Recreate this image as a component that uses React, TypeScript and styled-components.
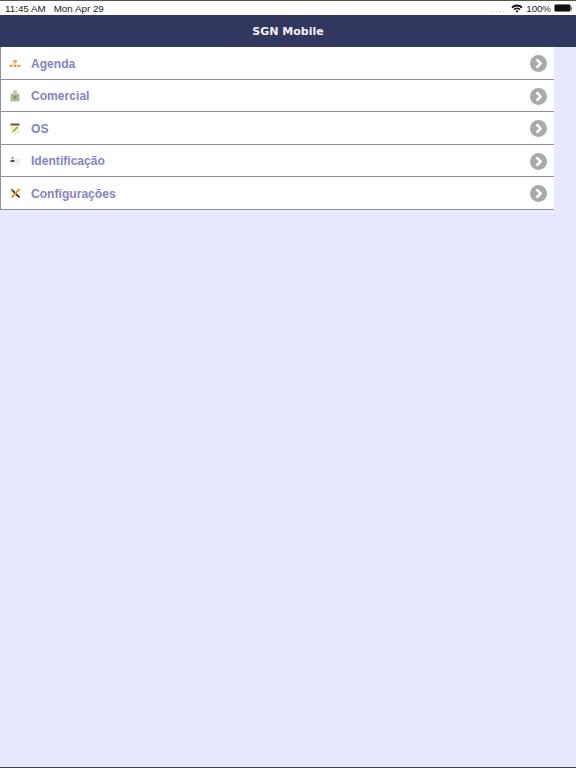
import React from "react"
import styled, { createGlobalStyle } from "styled-components"

const GlobalStyle = createGlobalStyle`
  html, body {
    margin: 0;
    padding: 0;
    height: 100%;
    background: #e7e7ff;
    font-family: "Liberation Sans", Arial, sans-serif;
  }
  #root {
    height: 100%;
  }
`

const AgendaIcon = () => (
  <svg width="12" height="10" viewBox="0 0 12 10">
    <rect x="4.2" y="1" width="3.6" height="2.8" fill="#f0a050" />
    <rect x="5.4" y="3.8" width="1.2" height="2" fill="#f3b98a" />
    <rect x="0.5" y="5.8" width="3" height="2" fill="#ec8f3c" />
    <rect x="4.5" y="5.8" width="3" height="2" fill="#ec8f3c" />
    <rect x="8.5" y="5.8" width="3" height="2" fill="#ec8f3c" />
  </svg>
)

const ComercialIcon = () => (
  <svg width="10" height="12" viewBox="0 0 10 12">
    <rect x="3" y="0.5" width="4" height="3" fill="#bcc8ae" />
    <rect x="0.5" y="3.5" width="9" height="8" rx="1" fill="#b0bca2" />
    <circle cx="5" cy="7.5" r="1.8" fill="#7d9669" />
  </svg>
)

const OsIcon = () => (
  <svg width="10" height="11" viewBox="0 0 10 11">
    <rect x="0.5" y="2" width="9" height="8.5" fill="#f5f1cf" />
    <rect x="0.5" y="0.5" width="9" height="2" fill="#7a4f42" />
    <path d="M3 8.5 L7.5 4" stroke="#86ad45" strokeWidth="1.6" />
  </svg>
)

const IdentIcon = () => (
  <svg width="12" height="10" viewBox="0 0 12 10">
    <rect x="1" y="3" width="10" height="6.5" fill="#f0f0f0" />
    <circle cx="3.5" cy="2" r="1.1" fill="#777" />
    <rect x="1.5" y="4" width="4" height="2" fill="#555" />
    <rect x="7" y="5" width="3.5" height="1" fill="#dedede" />
  </svg>
)

const ConfigIcon = () => (
  <svg width="11" height="11" viewBox="0 0 11 11">
    <path d="M1.5 1.5 L9.5 9.5" stroke="#4a3e32" strokeWidth="2" />
    <path d="M9.5 1 L1.5 9.5" stroke="#e39a28" strokeWidth="2" />
    <circle cx="2" cy="2" r="1.3" fill="#888" />
  </svg>
)

const Chevron = () => (
  <S.ChevronIcon width="17" height="17" viewBox="0 0 17 17">
    <circle cx="8.5" cy="8.5" r="8.5" fill="#a9a9a9" />
    <path d="M6.6 4.4 L10.6 8.5 L6.6 12.6" fill="none" stroke="#fff" strokeWidth="2.6" />
  </S.ChevronIcon>
)

const menu = [
  { label: "Agenda", icon: <AgendaIcon /> },
  { label: "Comercial", icon: <ComercialIcon /> },
  { label: "OS", icon: <OsIcon /> },
  { label: "Identificação", icon: <IdentIcon /> },
  { label: "Configurações", icon: <ConfigIcon /> },
]

export default function App() {
  return (
    <S.Page>
      <GlobalStyle />
      <S.StatusBar>
        <S.StatusGroup>
          <span>11:45 AM</span>
          <span>Mon Apr 29</span>
        </S.StatusGroup>
        <S.StatusRight>
          <S.Dots>....</S.Dots>
          <svg width="12" height="9" viewBox="0 0 12 9">
            <path d="M0.3 3 A8 8 0 0 1 11.7 3 L10.4 4.3 A6.2 6.2 0 0 0 1.6 4.3 Z" fill="#111" />
            <path d="M2.4 5 A5 5 0 0 1 9.6 5 L8.4 6.2 A3.3 3.3 0 0 0 3.6 6.2 Z" fill="#111" />
            <path d="M4.5 7 A2 2 0 0 1 7.5 7 L6 8.7 Z" fill="#111" />
          </svg>
          <S.Percent>100%</S.Percent>
          <S.Battery>
            <S.BatteryFill />
          </S.Battery>
          <S.BatteryNub />
        </S.StatusRight>
      </S.StatusBar>
      <S.Header>SGN Mobile</S.Header>
      <S.List>
        {menu.map((m) => (
          <S.Row key={m.label}>
            <S.IconSlot>{m.icon}</S.IconSlot>
            <S.Label>{m.label}</S.Label>
            <Chevron />
          </S.Row>
        ))}
      </S.List>
      <S.Spacer />
      <S.BottomLine />
    </S.Page>
  )
}

const S = {
  Page: styled.div`
    display: flex;
    flex-direction: column;
    height: 768px;
    overflow: hidden;
    background: #e7e7ff;
  `,
  StatusBar: styled.div`
    display: flex;
    flex: none;
    justify-content: space-between;
    align-items: center;
    height: 15px;
    box-sizing: border-box;
    border-top: 1px solid #555;
    padding: 0 4px 0 5px;
    background: #fff;
    font-size: 9.8px;
    color: #222;
  `,
  StatusGroup: styled.div`
    display: flex;
    gap: 8px;
  `,
  StatusRight: styled.div`
    display: flex;
    align-items: center;
    gap: 3px;
  `,
  Percent: styled.span`
    letter-spacing: -0.1px;
  `,
  Dots: styled.span`
    color: #aaa;
    letter-spacing: 1px;
    margin-right: 2px;
    line-height: 9px;
  `,
  Battery: styled.div`
    width: 17px;
    height: 8px;
    box-sizing: border-box;
    border: 1px solid #777;
    border-radius: 2px;
  `,
  BatteryFill: styled.div`
    height: 100%;
    background: #111;
  `,
  BatteryNub: styled.div`
    width: 1px;
    height: 3px;
    margin-left: -3px;
    background: #777;
  `,
  Header: styled.div`
    height: 32px;
    flex: none;
    display: flex;
    align-items: center;
    justify-content: center;
    background: #31375f;
    color: #f2f2f8;
    font-family: "DejaVu Sans", sans-serif;
    font-weight: bold;
    font-size: 11px;
  `,
  List: styled.div`
    display: flex;
    flex-direction: column;
    width: 554px;
    box-sizing: border-box;
    border-left: 1px solid #8f8f99;
  `,
  Row: styled.div`
    display: flex;
    align-items: center;
    height: 32.5px;
    box-sizing: border-box;
    background: #fff;
    border-bottom: 1px solid #8f8f99;
    padding: 2px 7px 0 8px;
  `,
  IconSlot: styled.div`
    display: flex;
    align-items: center;
    justify-content: center;
    width: 12px;
    margin-right: 10px;
  `,
  Label: styled.span`
    flex: 1;
    font-size: 12.1px;
    font-weight: bold;
    color: #8583c4;
  `,
  ChevronIcon: styled.svg`
    flex: none;
  `,
  Spacer: styled.div`
    flex: 1;
  `,
  BottomLine: styled.div`
    height: 1px;
    background: #3a3f63;
  `,
}
